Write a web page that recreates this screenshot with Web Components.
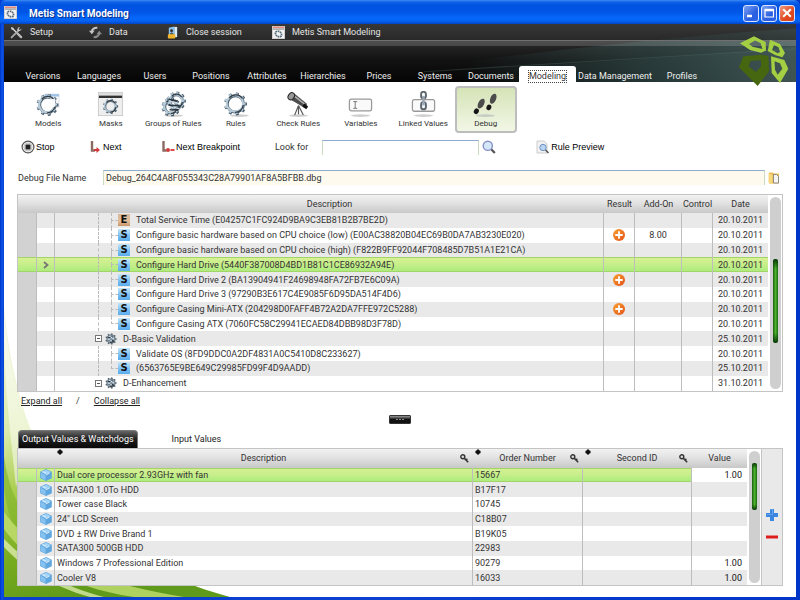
<!DOCTYPE html>
<html lang="en">
<head>
<meta charset="utf-8">
<title>Metis Smart Modeling</title>
<style>
  html, body { margin: 0; height: 100%; }
  body { font: 9px/12px Roboto, "Open Sans", sans-serif; color: #333; background: #fff; }
</style>
</head>
<body>
<metis-app></metis-app>
<script>
const define = (name, html, setup) => {
  const tpl = document.createElement('template');
  tpl.innerHTML = html;
  customElements.define(name, class extends HTMLElement {
    constructor() {
      super();
      this.attachShadow({ mode: 'open' }).append(tpl.content.cloneNode(true));
    }
    connectedCallback() {
      if (setup && !this.ready) { this.ready = true; setup(this, this.shadowRoot); }
    }
  });
};

/* ---------- icons ---------- */
const gear = (cx, cy, r, w, color) => {
  let d = '';
  for (let i = 0; i < 9; i++) {
    const a = i * Math.PI * 2 / 9;
    const p = k => (cx + Math.cos(a) * k).toFixed(2) + ' ' + (cy + Math.sin(a) * k).toFixed(2);
    d += `M${p(r)}L${p(r + w * 1.2)}`;
  }
  return `<circle cx="${cx}" cy="${cy}" r="${r}" fill="none" stroke="${color}" stroke-width="${w}"/><path d="${d}" stroke="${color}" stroke-width="${w * 1.1}" fill="none"/>`;
};
const shadedGear = (cx, cy, r, w) =>
  gear(cx, cy, r, w, '#4b5e6e') + gear(cx - .6, cy - .5, r, w * .75, '#b7cbd9') +
  `<path d="M${cx - r * .75} ${cy - r * .75}a${r} ${r} 0 0 1 ${r * 1.6} .6" stroke="#333c44" stroke-width="1.4" fill="none"/><path d="M${cx + r * .95} ${cy + 1}a${r} ${r} 0 0 1 ${-r} ${r * .9}" stroke="#2c353d" stroke-width="1.3" fill="none"/>`;
const shade = '<ellipse cx="14" cy="25.5" rx="10" ry="1.4" fill="#bbb" opacity=".7"/>';
const ICONS = {
  app: ['0 0 14 14', `<rect x=".5" y=".5" width="13" height="13" fill="#f1f1f1" stroke="#d8d0d0"/><path d="M1 1.5h12" stroke="#e98a7a" stroke-width="1.5"/><path d="M1 3.3h12" stroke="#777" stroke-width="1"/><ellipse cx="7" cy="8.6" rx="3.6" ry="2.7" transform="rotate(35 7 8.6)" fill="none" stroke="#55697a" stroke-width="1.8" stroke-dasharray="1.8 .6"/>`],
  tools: ['0 0 14 14', `<path d="M2.2 2.2l9.3 9.3" stroke="#ddd" stroke-width="1.4"/><path d="M8 8l4 4" stroke="#bbb" stroke-width="2.4" stroke-linecap="round"/><path d="M1.7 12.3L9 5" stroke="#aaa" stroke-width="2" stroke-linecap="round"/><path d="M12.6 2.6l-2 1.8-1.4-1.3 1.7-2a3 3 0 0 0-3 3.7 3 3 0 0 0 4.7-2.2z" fill="#ccc"/><path d="M1 1l2.5 1 .6 1.6-1.3.6-1.3-.8z" fill="#ccc"/>`],
  sync: ['0 0 14 14', `<path d="M3 6.500c0-3 2.500-4.700 6-4.500" fill="none" stroke="#c5c5c5" stroke-width="2.2"/><path d="M0 5h6L3 9z" fill="#c5c5c5"/><path d="M11 7.500c0 3-2.500 4.700-6 4.500" fill="none" stroke="#8c8c8c" stroke-width="2.2"/><path d="M8 9h6l-3-4z" fill="#8c8c8c"/>`],
  lock: ['0 0 14 14', `<path d="M3 2l6-1.5v12L3 11z" fill="#8cc3ec"/><path d="M9 1h3v11H9z" fill="#d8ecf9"/><circle cx="6" cy="5" r="1.6" fill="#333"/><path d="M4 11c0-3 .8-4 2-4s2.5 1 2.5 4z" fill="#555"/><rect x="2" y="9" width="8" height="4.5" rx=".8" fill="#f2b42d"/>`],
  models: ['0 0 28 28', `<path d="M10 3h15v14H10z" fill="#f4f6f8" stroke="#d5dbe0" stroke-width=".6"/><path d="M10 4.5h15" stroke="#9fc0e6" stroke-width="2.5"/><path d="M13 4l3 3" stroke="#e88" stroke-width="1.5"/>` + shadedGear(13, 14.5, 8, 2.8) + `<path d="M9 9l12-1v8l-7 3-5-3z" fill="#fff" opacity=".9"/>`],
  masks: ['0 0 28 28', `<rect x="1.5" y="1.5" width="25" height="24" fill="#eee" stroke="#ccc"/><path d="M2 6h24" stroke="#333" stroke-width="2.5"/><path d="M2 3h24" stroke="#ddd" stroke-width="2"/>` + shadedGear(14, 16, 5.5, 2)],
  rulesgroup: ['0 0 28 28', shade + shadedGear(11.5, 16.5, 6.5, 2.8) + shadedGear(17, 10.5, 6.5, 2.8) + `<path d="M9 8c3 3 6 0 9 3M9 14c4 3 7-1 12 2M10 19c3 2 6-1 9 1" fill="none" stroke="#29343e" stroke-width="1.7"/><path d="M10 10c3 3 6 0 9 3M9 16.5c4 3 7-1 11 2" fill="none" stroke="#d3e0e9" stroke-width="1.2"/>`],
  rules: ['0 0 28 28', shade.replace('cx="14"', 'cx="18"') + shadedGear(14, 13.5, 8.5, 2.8)],
  scope: ['0 0 28 28', shade + `<path d="M5 4.5l4-2.5 14 11.5-2.5 4L6 9z" fill="#4d4d4d"/><path d="M8 4l13 10" stroke="#b5b5b5" stroke-width="1.5"/><ellipse cx="6.5" cy="5.5" rx="3" ry="4" transform="rotate(35 6.5 5.5)" fill="#999" stroke="#222"/><path d="M20 13l4 3-2 3-4-3z" fill="#111"/><path d="M14 15l-4 10M14 15v9M14 15l5 10" stroke="#555" stroke-width="1.2"/>`],
  variable: ['0 0 28 28', shade + `<rect x="2.5" y="8.5" width="23" height="12" rx="2" fill="#fafafa" stroke="#999" stroke-width="1.3"/><path d="M6.5 11h4M8.500 11v7M6.500 18h4" stroke="#777" stroke-width="1" fill="none"/>`],
  linked: ['0 0 28 28', shade + `<rect x="2.5" y="9" width="23" height="12" rx="2" fill="#fafafa" stroke="#999" stroke-width="1.3"/><g fill="none" stroke="#5d6770" stroke-width="2"><rect x="11.5" y="0.8" width="5" height="7" rx="2.5"/><rect x="11.5" y="11.5" width="5" height="7.5" rx="2.5"/></g><path d="M14 5v10" stroke="#9aa7b2" stroke-width="2.5"/>`],
  steps: ['0 0 28 28', shade + `<g fill="#4b4b4b"><ellipse cx="9.5" cy="13" rx="3" ry="5.5" transform="rotate(28 9.5 13)"/><ellipse cx="22" cy="8" rx="3" ry="5.5" transform="rotate(22 22 8)"/></g><g fill="#161616"><ellipse cx="4.5" cy="21" rx="2.5" ry="3" transform="rotate(30 4.5 21)"/><ellipse cx="17.5" cy="17" rx="2.5" ry="3" transform="rotate(22 17.5 17)"/></g>`],
  stop: ['0 0 14 14', `<circle cx="7" cy="7" r="5.9" fill="#f4f4f4" stroke="#555" stroke-width="1.2"/><rect x="4.5" y="4.5" width="5" height="5" rx=".6" fill="#222"/><circle cx="7" cy="7" r="4" fill="none" stroke="#aaa" stroke-width=".7"/>`],
  next: ['0 0 14 14', `<path d="M4 1v9.500h3" fill="none" stroke="#8c6a62" stroke-width="2.4"/><path d="M6 10h3" stroke="#cf3b3b" stroke-width="2"/><path d="M8.500 7l3.500 3-3.500 3z" fill="#cf3b3b"/>`],
  nextbp: ['0 0 14 14', `<path d="M2.500 1v9.500h3" fill="none" stroke="#8c6a62" stroke-width="2.4"/><circle cx="7" cy="10" r="2" fill="#cf3b3b"/><path d="M9.500 10h4" stroke="#e04848" stroke-width="2"/>`],
  search: ['0 0 14 14', `<path d="M9 9l3.800 4" stroke="#555" stroke-width="2.2"/><circle cx="5.8" cy="5.8" r="4.6" fill="#d4e6fa" stroke="#8792c4" stroke-width="1.4"/>`],
  preview: ['0 0 14 14', `<path d="M1 1h7l3 3v9H1z" fill="#f2f2f2" stroke="#ccc"/><circle cx="7" cy="7.5" r="3.2" fill="#b9d4f1" stroke="#6f93bf"/><path d="M9.500 10l3 3" stroke="#555" stroke-width="1.6"/>`],
  folder: ['0 0 14 14', `<path d="M2 1.500h4l1 1h5v10H2z" fill="#e9bd54"/><path d="M6.500 3.500h3l2 2V12h-5z" fill="#f5f5f5" stroke="#777" stroke-width=".8"/><path d="M1.500 2l4 2v9.500l-4-2z" fill="#f7d77d"/>`],
  plus: ['0 0 12 12', `<defs><linearGradient id="p" x2="1" y2="1"><stop stop-color="#f9a030"/><stop offset="1" stop-color="#e2521a"/></linearGradient></defs><circle cx="6" cy="6" r="6" fill="url(#p)"/><path d="M6 2.300v7.400M2.300 6h7.400" stroke="#fff" stroke-width="1.8"/>`],
  arrow: ['0 0 12 12', `<path d="M4 3l3.500 3L4 9" fill="none" stroke="#777" stroke-width="1.8"/>`],
  group: ['0 0 12 12', gear(6, 6, 3.8, 1.5, '#5a6975') + `<circle cx="6" cy="6" r="3.8" fill="#8fa1af"/><path d="M3 4.500l5-.5M3.500 7l5 .5M5 9.500l4-1" stroke="#222c35" stroke-width="1.2"/><path d="M4 3l5 3M3 6l4 2" stroke="#d9e5ee" stroke-width="1"/>`],
  cube: ['0 0 12 12', `<path d="M6 0l5.800 2.800v6.400L6 12 .2 9.200V2.800z" fill="#5fa6df"/><path d="M6 .7l5 2.300-5 2.500L1 3z" fill="#a3d3f6"/><path d="M1 4l4.500 2.200v5L1 9z" fill="#86c2f0"/><path d="M2.500 2.500L6 4.200M6 5.800L9.500 4" stroke="#e4f3fd" stroke-width=".9"/>`],
  key: ['0 0 9 9', `<circle cx="2.8" cy="2.8" r="2" fill="#ddd" stroke="#333" stroke-width="1.4"/><path d="M4.400 4.400l3.800 3.800M6 6l1.400-1.200" stroke="#333" stroke-width="1.5"/>`],
  sort: ['0 0 6 6', `<path d="M3 0l2.500 2.500h-5zM3 6L.5 3.500h5z" fill="#111"/><rect x=".5" y="1.8" width="5" height="2.4" fill="#111"/>`],
  add: ['0 0 12 12', `<path d="M4 0h4v4h4v4H8v4H4V8H0V4h4z" fill="#3a86e0"/><path d="M4.500.5h2v5h-6" fill="none" stroke="#6fa9ee" stroke-width=".8"/>`],
  minus: ['0 0 12 12', `<path d="M0 4.500h12v3H0z" fill="#dd1c1c"/>`],
  min: ['0 0 12 12', `<path d="M2 9h5" stroke="#fff" stroke-width="2.5"/>`],
  max: ['0 0 12 12', `<path d="M2 3h8.500" stroke="#fff" stroke-width="2.5"/><path d="M2 2v8h8.500V2" fill="none" stroke="#fff" stroke-width="1.2"/>`],
  close: ['0 0 12 12', `<path d="M2.200 2.200l7.600 7.600M9.800 2.200L2.200 9.800" stroke="#fff" stroke-width="2"/>`],
  logo: ['0 0 50 50', `<g fill-rule="evenodd"><path fill="#a4cf42" d="M1 7.300L15 .3l11.700 5.700.3 8.500-5 2.200L11 14zM10 8l6-3.500 5.500 2.500 2 6-10-2.300z"/><path fill="#a4cf42" d="M31 3.700L41 8l5 9-2.700 4.300-7.300-2.300-7.300-4zM35 9l4.500 2.300L41 16l-2.300 1.300L33 14z"/><path fill="#a4cf42" d="M32 20.300L45.300 24l4 8.700L41 47l-8.300-10zM35.500 25.300l5.500 2 2.300 5.400-4.600 6-2.700-5z"/><path fill="#46660f" d="M4.300 20.300L22 18.700l7.500 1.300.5 15.300L18.700 50 0 31.300zM11.500 25l10.500-1v6.300L17 36l-7.500-5.700z"/></g>`]
};
customElements.define('m-icon', class extends HTMLElement {
  constructor() { super(); this.attachShadow({ mode: 'open' }); }
  connectedCallback() {
    const [box, art] = ICONS[this.getAttribute('name')];
    this.shadowRoot.innerHTML = `<style>:host{display:block;flex:none;width:var(--size,14px);height:var(--size,14px)}svg{display:block;width:100%;height:100%}</style><svg viewBox="${box}" aria-hidden="true">${art}</svg>`;
  }
});
const placeIcon = (el, root) => {
  root.querySelector('div').innerHTML = `<m-icon name="${el.getAttribute('icon')}"></m-icon>`;
};

/* ---------- title bar ---------- */
define('title-bar', `<style>
  :host{display:flex;align-items:center;gap:12px;height:24px;padding:0 5px 0 4px;color:#fff;
    background:linear-gradient(#3f8bf5 0,#0f63e8 2px,#0053e0 5px,#0055e5 12px,#0668fb 18px,#0562f3 21px,#0244c4 24px);border-radius:6px 6px 0 0}
  h1{flex:1;margin:3px 0 0;font:bold 10px/14px Roboto,sans-serif;text-shadow:1px 1px 1px #0a2a80}
  m-icon{--size:13px}
  nav{display:flex;gap:2px;margin-top:2px}
  button{display:grid;place-items:center;width:16px;height:17px;padding:0;border:1px solid #dbe6fd;border-radius:3px;background:linear-gradient(135deg,#7fa3f3,#2b5fe0 60%,#2a62e8)}
  button.x{background:linear-gradient(135deg,#f09a80,#e04a20 60%,#d8401a)}
  button m-icon{--size:12px}
</style><m-icon name="app"></m-icon><h1><slot></slot></h1>
<nav><button aria-label="Minimize"><m-icon name="min"></m-icon></button><button aria-label="Maximize"><m-icon name="max"></m-icon></button><button class="x" aria-label="Close"><m-icon name="close"></m-icon></button></nav>`);

/* ---------- main menu ---------- */
define('menu-item', `<style>
  :host{display:block}
  button{display:flex;align-items:center;gap:7px;padding:0;border:0;background:none;color:#e4e4e4;font:9px/14px Roboto,sans-serif}
  div{--size:13px}
</style><button><div></div><slot></slot></button>`, placeIcon);

/* ---------- tabs ---------- */
define('nav-tab', `<style>
  :host{display:block}
  button{display:flex;align-items:flex-end;justify-content:center;width:100%;height:16px;padding:0;border:0;background:none;color:#eee;font:9px/11px Roboto,sans-serif;white-space:nowrap}
  :host([active]) button{background:#fff;color:#333;border-radius:3px 3px 0 0}
  :host([active]) span{outline:1px dotted #444}
</style><button role="tab"><span><slot></slot></span></button>`);

define('app-header', `<style>
  :host{display:block;position:relative;background:#111;color:#eee}
  .swoosh{position:absolute;inset:0;width:100%;height:100%}
  .menu{position:relative;display:flex;height:16px;padding-left:6px;align-items:center;border-bottom:1px solid #707070;background:linear-gradient(#3a3a3a99,#26262699)}
  .menu menu-item:nth-child(1){width:79px}.menu menu-item:nth-child(2){width:77px}.menu menu-item:nth-child(3){width:106px}
  .stripe{position:relative;height:5px;background:#ffffff2a}
  .tabs{position:relative;display:grid;align-items:end;height:36px;padding:0 86px 0 11px;
    grid-template-columns:repeat(9,minmax(0,56fr)) minmax(0,57fr) minmax(0,78fr) minmax(0,56fr)}
</style>
<svg class="swoosh" viewBox="0 0 792 56" preserveAspectRatio="none" aria-hidden="true">
  <defs><linearGradient id="a" x2="0" y2="1"><stop stop-color="#343434"/><stop offset=".3" stop-color="#2b2b2b"/><stop offset=".62" stop-color="#121212"/><stop offset="1" stop-color="#050505"/></linearGradient>
  <linearGradient id="b"><stop offset=".3" stop-color="#35504e" stop-opacity="0"/><stop offset=".72" stop-color="#35504e" stop-opacity=".6"/><stop offset="1" stop-color="#4a6463" stop-opacity=".75"/></linearGradient></defs>
  <rect width="792" height="56" fill="url(#a)"/><path d="M320 56Q560 20 792 4V56z" fill="url(#b)"/><path d="M300 50Q600 40 792 22V56H300z" fill="url(#b)" opacity=".4"/><path d="M420 46Q600 36 792 24" stroke="#5a7674" stroke-width="1" fill="none" opacity=".3"/>
</svg>
<div class="menu"><menu-item icon="tools">Setup</menu-item><menu-item icon="sync">Data</menu-item><menu-item icon="lock">Close session</menu-item><menu-item icon="app">Metis Smart Modeling</menu-item></div>
<div class="stripe"></div>
<div class="tabs" role="tablist"><nav-tab>Versions</nav-tab><nav-tab>Languages</nav-tab><nav-tab>Users</nav-tab><nav-tab>Positions</nav-tab><nav-tab>Attributes</nav-tab><nav-tab>Hierarchies</nav-tab><nav-tab>Prices</nav-tab><nav-tab>Systems</nav-tab><nav-tab>Documents</nav-tab><nav-tab active>Modeling</nav-tab><nav-tab>Data Management</nav-tab><nav-tab>Profiles</nav-tab></div>`);

/* ---------- ribbon ---------- */
define('ribbon-button', `<style>
  :host{display:block}
  button{display:flex;flex-direction:column;align-items:center;justify-content:flex-end;width:100%;height:47px;padding:0 0 2px;border:2px solid transparent;border-radius:4px;background:none;color:#333;font:8px/10px Roboto,sans-serif;white-space:nowrap}
  :host([active]) button{border-color:#bdbdbd;background:linear-gradient(#d5e3b7,#f2f7e6)}
  div{--size:27px;margin-bottom:1px}
</style><button><div></div><slot></slot></button>`, placeIcon);
define('tool-button', `<style>
  :host{display:block}
  button{display:flex;align-items:center;gap:1px;padding:0;border:0;background:none;color:#000;font:9px/14px "Liberation Sans",sans-serif;white-space:nowrap}
</style><button><div></div><slot></slot></button>`, placeIcon);

/* ---------- scroll bar ---------- */
define('scroll-bar', `<style>
  :host{display:grid;grid-template-rows:var(--before) var(--thumb) 1fr;justify-items:center;box-sizing:border-box;width:14px;padding:2px 1px;background:#fff}
  .track{grid-area:1/1/4/2;width:11px;border-radius:6px;background:#cfcfcf}
  .thumb{grid-area:2/1;width:5px;border-radius:2px;background:linear-gradient(#063a06,transparent 12%,transparent 88%,#063a06),linear-gradient(90deg,#1c5c12,#4cb32c 50%,#1d6a12)}
</style><div class="track"></div><div class="thumb"></div>`);

/* ---------- shared grid look ---------- */
const GRID = `
  table{width:100%;height:100%;border-collapse:separate;border-spacing:0;table-layout:fixed}
  th,thead td{padding:0;font-weight:normal;color:#333;text-align:center;white-space:nowrap}
  thead tr{background:linear-gradient(#f2f2f2,#e2e2e2 45%,#c8c8c8)}
  tbody td{padding:0;height:14px;line-height:14px;white-space:nowrap;overflow:hidden;border-right:1px solid #bdbdbd}
  tbody td:last-child{border-right:0}
  td.mark{background:#d2d2d2}
  tr.sel td{background:linear-gradient(#d9f295,#c6ee8a 50%,#a9ec7c);box-shadow:inset 0 1px #a2d468,inset 0 -1px #a2d468}
  m-icon{--size:12px;margin:0 auto}`;

define('rules-grid', `<style>
  :host{display:grid;grid-template-columns:1fr 14px;border:1px solid #c4c4c4;background:#fff;overflow:hidden}
  ${GRID}
  th{height:18px}
  tbody tr:nth-child(odd){background:#e9e9e9}
  .tree{display:flex;align-items:center;height:100%;padding-left:43px}
  .trunk{align-self:stretch;width:13px;border-left:1px dashed #bbb;box-sizing:border-box}
  .branch{align-self:stretch;display:flex;flex-direction:column;width:7px}
  .branch i{flex:1;border-left:1px dashed #bbb}
  .branch i:first-child{border-bottom:1px dashed #bbb}
  .end i:last-child{border-left-color:transparent}
  .tree m-icon{margin:0 6px 0 0}
  b{width:12px;height:12px;margin-right:6px;font:bold 10px/12px "DejaVu Sans",sans-serif;text-align:center;color:#111;background:linear-gradient(#c4e5fa,#7cc0f2 55%,#5aacec)}
  b.e{background:linear-gradient(#d9b79b,#e2bd98 60%,#c89468)}
  .box{width:7px;height:7px;margin:0 3px 0 -3px;box-sizing:border-box;border:1px solid #777;background:linear-gradient(#555,#555) center/3px 1px no-repeat #fff}
  .c{text-align:center}
</style>
<table><colgroup><col style="width:19px"><col style="width:18px"><col><col style="width:31px"><col style="width:47px"><col style="width:31px"><col style="width:55px"></colgroup>
<thead><tr><td></td><td></td><th>Description</th><th>Result</th><th>Add-On</th><th>Control</th><th>Date</th></tr></thead><tbody></tbody></table>
<scroll-bar style="--before:62px;--thumb:84px"></scroll-bar>`, (el, root) => {
  const rows = [
    ['e', 'Total Service Time (E04257C1FC924D9BA9C3EB81B2B7BE2D)', '20.10.2011'],
    ['s', 'Configure basic hardware based on CPU choice (low) (E00AC38820B04EC69B0DA7AB3230E020)', '20.10.2011', 1, '8.00'],
    ['s', 'Configure basic hardware based on CPU choice (high) (F822B9FF92044F708485D7B51A1E21CA)', '20.10.2011'],
    ['s', 'Configure Hard Drive (5440F387008D4BD1B81C1CE86932A94E)', '20.10.2011'],
    ['s', 'Configure Hard Drive 2 (BA13904941F24698948FA72FB7E6C09A)', '20.10.2011', 1],
    ['s', 'Configure Hard Drive 3 (97290B3E617C4E9085F6D95DA514F4D6)', '20.10.2011'],
    ['s', 'Configure Casing Mini-ATX (204298D0FAFF4B72A2DA7FFE972C5288)', '20.10.2011', 1],
    ['s end', 'Configure Casing ATX (7060FC58C29941ECAED84DBB98D3F78D)', '20.10.2011'],
    ['g', 'D-Basic Validation', '25.10.2011'],
    ['s', 'Validate OS (8FD9DDC0A2DF4831A0C5410D8C233627)', '20.10.2011'],
    ['s end', '(6563765E9BE649C29985FD99F4D9AADD)', '25.10.2011'],
    ['g', 'D-Enhancement', '31.10.2011']];
  root.querySelector('tbody').innerHTML = rows.map(([k, text, date, res, add], i) => `<tr class="${i === 3 ? 'sel' : ''}"><td class="mark"></td><td>${i === 3 ? '<m-icon name="arrow"></m-icon>' : ''}</td><td><div class="tree">${k === 'g'
    ? `<span class="box"></span><m-icon name="group"></m-icon>`
    : `<span class="trunk"></span><span class="branch ${k.includes('end') ? 'end' : ''}"><i></i><i></i></span><b class="${k[0]}">${k[0].toUpperCase()}</b>`}<span>${text}</span></div></td><td>${res ? '<m-icon name="plus"></m-icon>' : ''}</td><td class="c">${add || ''}</td><td></td><td class="c">${date}</td></tr>`).join('');
});

define('values-grid', `<style>
  :host{display:grid;grid-template-columns:1fr 14px 21px;border:1px solid #c4c4c4;background:#fff;overflow:hidden}
  ${GRID}
  th{height:19px;position:relative}
  .h{display:flex;align-items:center;padding:0 4px 0 12px}
  .h span{flex:1}
  .h m-icon{--size:9px;margin:0}
  .sort{--size:6px;position:absolute;top:0;left:2px}
  tbody tr:nth-child(even){background:#e9e9e9}
  tbody td{padding-left:2px}
  tbody td.mark,tbody td.pic{padding:0}
  tbody td.n{padding-right:5px;text-align:right;color:#111}
  tr.sel td.n{background:#fff;box-shadow:none}
  aside{display:flex;flex-direction:column;align-items:center;gap:10px;padding-top:60px;background:#e9e9e9;border-left:1px solid #c4c4c4}
  aside button{padding:0;border:0;background:none}
</style>
<table><colgroup><col style="width:19px"><col style="width:18px"><col><col style="width:110px"><col style="width:109px"><col style="width:55px"></colgroup>
<thead><tr><td></td><td></td><th><m-icon class="sort" name="sort"></m-icon><div class="h"><span>Description</span><m-icon name="key"></m-icon></div></th>
<th><m-icon class="sort" name="sort"></m-icon><div class="h"><span>Order Number</span><m-icon name="key"></m-icon></div></th>
<th><m-icon class="sort" name="sort"></m-icon><div class="h"><span>Second ID</span><m-icon name="key"></m-icon></div></th><th>Value</th></tr></thead><tbody></tbody></table>
<scroll-bar style="--before:12px;--thumb:47px"></scroll-bar>
<aside><button aria-label="Add"><m-icon name="add"></m-icon></button><button aria-label="Remove"><m-icon name="minus"></m-icon></button></aside>`, (el, root) => {
  const rows = [['Dual core processor 2.93GHz with fan', '15667', '1.00'], ['SATA300 1.0To HDD', 'B17F17'], ['Tower case Black', '10745'], ['24" LCD Screen', 'C18B07'], ['DVD ± RW Drive Brand 1', 'B19K05'], ['SATA300 500GB HDD', '22983'], ['Windows 7 Professional Edition', '90279', '1.00'], ['Cooler V8', '16033', '1.00']];
  root.querySelector('tbody').innerHTML = rows.map(([d, o, v], i) => `<tr class="${i ? '' : 'sel'}"><td class="mark"></td><td class="pic"><m-icon name="cube"></m-icon></td><td>${d}</td><td>${o}</td><td></td><td class="n">${v || ''}</td></tr>`).join('');
});

/* ---------- application ---------- */
define('metis-app', `<style>
  :host{display:flex;flex-direction:column;min-height:100vh;box-sizing:border-box;background:linear-gradient(90deg,#0030c8,#0855e8 2px,#0a3fd0 4px,#0a3fd0 50%,#0036c8)}
  .body{position:relative;flex:1;display:flex;flex-direction:column;margin:0 4px 3px;background:#fff}
  .leaf{position:absolute;left:0;bottom:0;width:226px;height:290px}
  .logo{position:absolute;right:7px;top:12px;--size:50px}
  .ribbon{display:grid;grid-template-columns:repeat(8,1fr);padding:4px 279px 0 13px}
  .tools{position:relative;display:flex;align-items:center;height:16px;margin-top:6px;padding-left:17px}
  .tools tool-button:nth-child(1){width:67px}.tools tool-button:nth-child(2){width:73px}.tools tool-button:nth-child(3){width:114px}
  .tools input{width:157px;margin:0 3px 0 14px}
  .tools .find{padding:0;border:0;background:none;margin-right:40px}
  input{box-sizing:border-box;height:15px;padding:0 2px;border:1px solid #c9dcc0;border-top-color:#8fa9cf;border-bottom:0;background:#fff;font:9px/12px Roboto,sans-serif;color:#333}
  .file{display:flex;align-items:center;margin:15px 15px 9px 14px}
  .file label{width:85px}
  .file input{flex:1;min-width:0;background:#fefaee}
  .file button{padding:0;margin:0 0 0 2px;border:0;background:none}
  rules-grid{position:relative;flex:198 1 0;margin:0 13px}
  .links{position:relative;display:flex;gap:14px;margin:3px 17px 0;height:12px}
  .links a{color:#222}
  .grip{position:relative;align-self:center;width:22px;height:9px;margin:8px 0 6px;padding:2px 5px;border:1px solid #333;border-radius:1px;background:radial-gradient(circle,#fff 0 1px,transparent 1px) center/3px 3px content-box,linear-gradient(#999,#111 50%);background-repeat:repeat-x,no-repeat}
  .tabs{position:relative;display:flex;align-items:stretch;gap:31px;margin-left:14px;height:18px}
  .tabs button{padding:0 3px;border:0;background:none;font:9px/18px Roboto,sans-serif;color:#222;white-space:nowrap}
  .tabs .on{min-width:119px;color:#fff;border:1px solid #777;border-bottom:0;border-radius:4px 4px 0 0;background:linear-gradient(#666,#222 45%,#080808);line-height:16px}
  values-grid{position:relative;flex:138 1 0;margin:0 13px 11px}
</style>
<title-bar>Metis Smart Modeling</title-bar>
<div class="body">
  <svg class="leaf" viewBox="0 0 226 290" preserveAspectRatio="none" aria-hidden="true">
    <defs><linearGradient id="l" x2=".3" y2="1"><stop stop-color="#f3f7e2"/><stop offset=".4" stop-color="#dcebab"/><stop offset=".6" stop-color="#a9cd4c"/><stop offset=".8" stop-color="#79ac20"/><stop offset="1" stop-color="#5f9a1a"/></linearGradient></defs>
    <path d="M0 0C12 130 60 245 226 290H0z" fill="url(#l)"/>
    <path d="M0 10C6 60 14 90 28 120L12 180C6 120 0 80 0 10z" fill="#fff" opacity=".5"/>
    <path d="M0 150C5 180 12 195 20 205V240C8 220 2 200 0 180z" fill="#7db22a" opacity=".6"/>
    <path d="M0 205C40 260 110 278 180 290H130C60 280 20 250 0 222z" fill="#c3de70" opacity=".8"/>
    <path d="M0 232C30 262 60 280 100 290H86C50 280 20 262 0 240z" fill="#eaf5bd" opacity=".7"/>
  </svg>
  <app-header></app-header>
  <m-icon class="logo" name="logo"></m-icon>
  <div class="ribbon">
    <ribbon-button icon="models">Models</ribbon-button><ribbon-button icon="masks">Masks</ribbon-button><ribbon-button icon="rulesgroup">Groups of Rules</ribbon-button><ribbon-button icon="rules">Rules</ribbon-button><ribbon-button icon="scope">Check Rules</ribbon-button><ribbon-button icon="variable">Variables</ribbon-button><ribbon-button icon="linked">Linked Values</ribbon-button><ribbon-button icon="steps" active>Debug</ribbon-button>
  </div>
  <div class="tools"><tool-button icon="stop">Stop</tool-button><tool-button icon="next">Next</tool-button><tool-button icon="nextbp">Next Breakpoint</tool-button>
    <label for="q">Look for</label><input id="q" type="text"><button class="find" aria-label="Search"><m-icon name="search"></m-icon></button><tool-button icon="preview">Rule Preview</tool-button></div>
  <div class="file"><label for="f">Debug File Name</label><input id="f" type="text" value="Debug_264C4A8F055343C28A79901AF8A5BFBB.dbg"><button aria-label="Open file"><m-icon name="folder"></m-icon></button></div>
  <rules-grid></rules-grid>
  <div class="links"><a href="#expand">Expand all</a><span>/</span><a href="#collapse">Collapse all</a></div>
  <button class="grip" aria-label="Resize panels"></button>
  <div class="tabs" role="tablist"><button class="on" role="tab">Output Values &amp; Watchdogs</button><button role="tab">Input Values</button></div>
  <values-grid></values-grid>
</div>`);
</script>
</body>
</html>
